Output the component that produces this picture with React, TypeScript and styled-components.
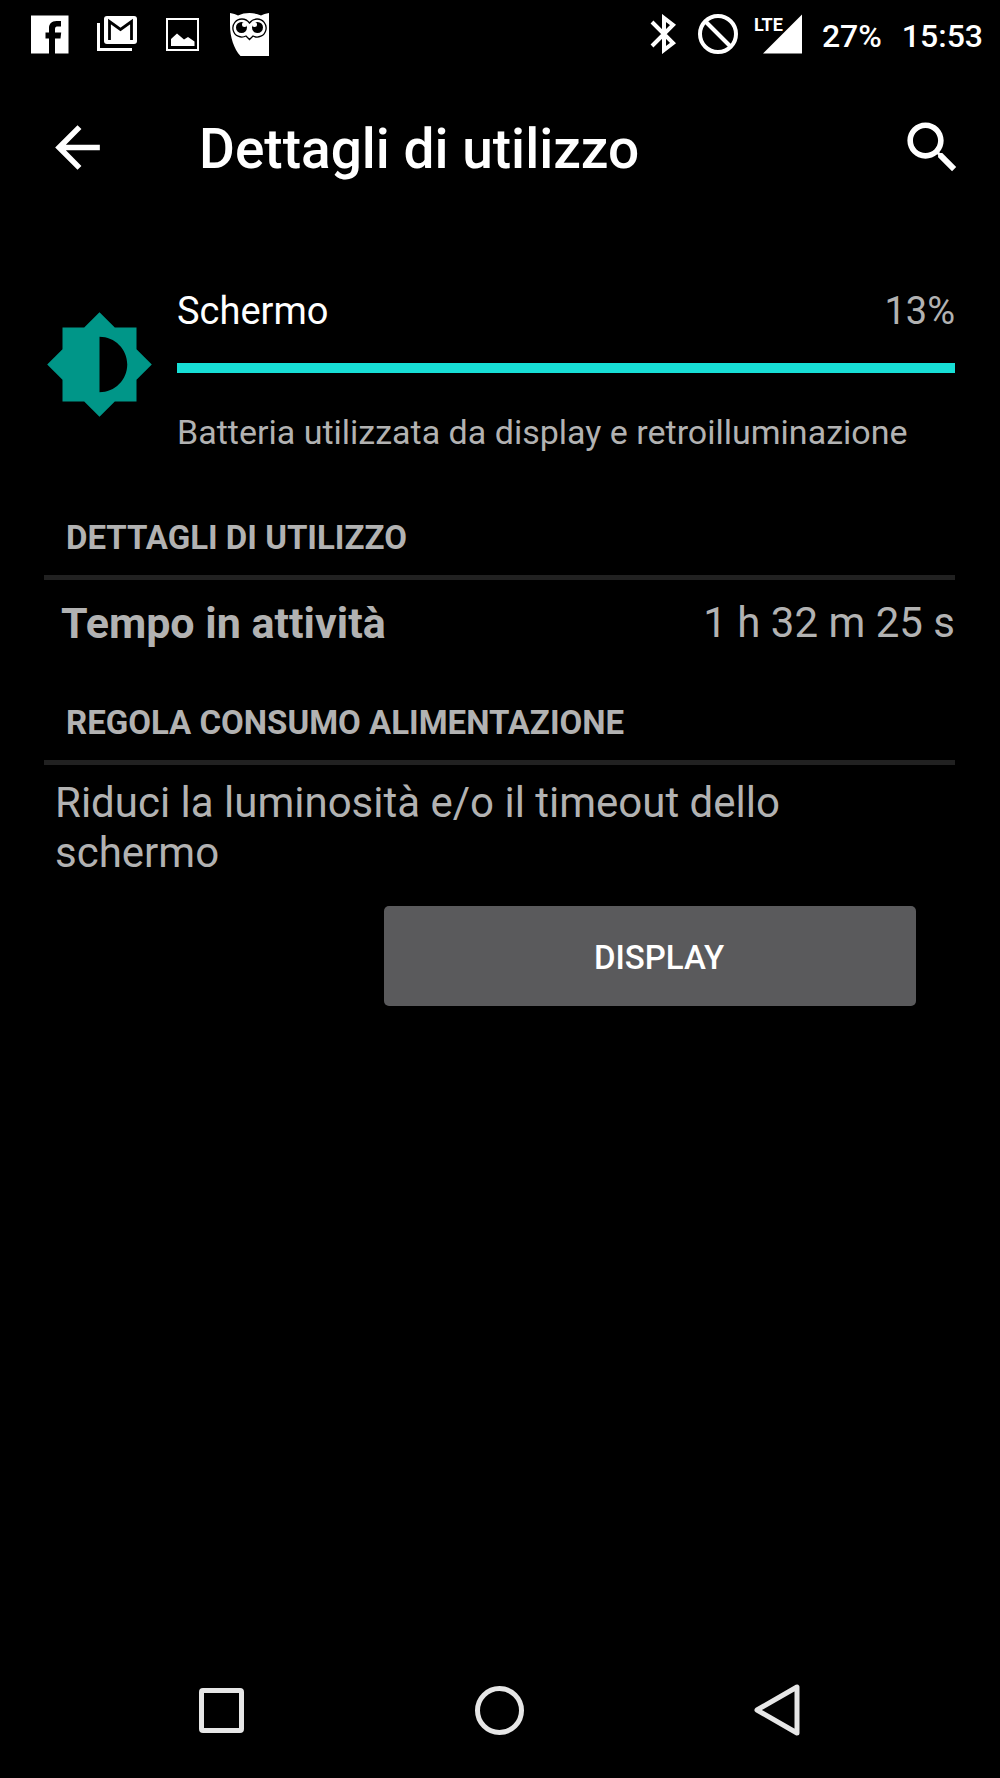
import React from "react";
import styled, { createGlobalStyle } from "styled-components";

const color = {
  background: "#000000",
  primary: "#ffffff",
  secondary: "#b2b2b2",
  divider: "#212121",
  teal: "#009688",
  accent: "#17dfd6",
  button: "#5a5a5c",
  nav: "#e6e6e6",
};

const GlobalStyle = createGlobalStyle`
  *, *::before, *::after { box-sizing: border-box; }
  body {
    margin: 0;
    background: ${color.background};
    color: ${color.secondary};
    font-family: Roboto, "Noto Sans", sans-serif;
  }
  h1, h2, p, dl, dt, dd { margin: 0; }
  button { font: inherit; color: inherit; border: 0; padding: 0; cursor: pointer; }
  svg { display: block; flex: none; }
`;

const Screen = styled.div`
  display: flex;
  flex-direction: column;
  min-height: 100vh;
`;

const StatusBar = styled.div`
  display: flex;
  justify-content: space-between;
  align-items: center;
  height: 68px;
  padding: 0 17px 0 30px;
  color: ${color.primary};
`;

const StatusGroup = styled.div<{ $gap: number }>`
  display: flex;
  align-items: center;
  gap: ${(p) => p.$gap}px;
`;

const Signal = styled.div`
  display: flex;
  align-items: flex-start;
  position: relative;
  width: 48px;
  justify-content: flex-end;
`;

const NetworkType = styled.span`
  position: absolute;
  left: 0;
  top: 0;
  font: 700 18px/22px Roboto, sans-serif;
`;

const StatusText = styled.span`
  font-size: 32px;
  line-height: 40px;
  font-weight: 500;
  padding-top: 4px;
`;

const AppBar = styled.header`
  display: flex;
  align-items: center;
  height: 158px;
  padding: 0 34px 0 44px;
  color: ${color.primary};
`;

const IconButton = styled.button`
  background: none;
`;

const Title = styled.h1`
  flex: 1;
  padding: 4px 0 0 88px;
  font-size: 55px;
  line-height: 66px;
  font-weight: 500;
`;

const Content = styled.main`
  flex: 1;
  padding: 62px 45px 0 44px;
`;

const Usage = styled.section`
  display: flex;
  align-items: flex-start;
  gap: 22px;
`;

const UsageIcon = styled.div`
  padding-top: 21px;
`;

const UsageBody = styled.div`
  flex: 1;
`;

const UsageLabel = styled.div`
  display: flex;
  justify-content: space-between;
  font-size: 38px;
  line-height: 46px;
`;

const UsageName = styled.span`
  color: ${color.primary};
`;

const Bar = styled.div`
  height: 10px;
  margin: 29px 0 39px;
  background: ${color.accent};
`;

const Description = styled.p`
  font-size: 34px;
  line-height: 40px;
`;

const SectionTitle = styled.h2<{ $gap: number }>`
  margin-top: ${(p) => p.$gap}px;
  padding: 0 22px 17px;
  border-bottom: 5px solid ${color.divider};
  font-size: 33px;
  line-height: 40px;
  font-weight: 700;
`;

const DetailRow = styled.dl`
  display: flex;
  justify-content: space-between;
  padding: 18px 0 0 17px;
  font-size: 42px;
  line-height: 50px;
`;

const DetailName = styled.dt`
  font-size: 43px;
  font-weight: 700;
`;

const Advice = styled.p`
  padding: 13px 100px 0 11px;
  font-size: 42px;
  line-height: 50px;
`;

const Actions = styled.div`
  display: flex;
  justify-content: flex-end;
  padding: 28px 39px 0 0;
`;

const ActionButton = styled.button`
  && {
    width: 61%;
    height: 100px;
    padding: 4px 0 0 18px;
    border-radius: 5px;
    background: ${color.button};
    color: ${color.primary};
    font-size: 33px;
    line-height: 40px;
    font-weight: 500;
  }
`;

const NavBar = styled.nav`
  display: grid;
  grid-template-columns: repeat(3, 1fr);
  align-items: center;
  height: 136px;
  padding: 0 84px 0 82px;
  color: ${color.nav};
`;

const NavButton = styled.button`
  display: flex;
  justify-content: center;
  background: none;
`;

const FacebookIcon = () => (
  <svg width="39" height="39" viewBox="0 0 39 39" fill="currentColor" aria-hidden="true">
    <path d="M1 0.500H38.500V38.500H25V23.500H30.500L31.200 17.500H25V14C25 12 26 11.500 28 11.500H31V6H26.500C21.500 6 19 9 19 13V17.500H15.500V23.500H19V38.500H1Z" />
  </svg>
);

const MailIcon = () => (
  <svg width="40" height="36" viewBox="0 0 40 36" fill="none" aria-hidden="true">
    <path d="M1.500 7V33.500H35" stroke="currentColor" strokeWidth="3" />
    <rect x="7" y="0" width="33" height="28" rx="3" fill="currentColor" />
    <path d="M12.500 24V5.500L23.500 13.500L34.500 5.500V24" stroke="#000" strokeWidth="2.800" />
  </svg>
);

const ImageIcon = () => (
  <svg width="37" height="33" viewBox="-1 0 37 33" fill="none" aria-hidden="true">
    <rect x="1" y="1" width="31" height="31" stroke="currentColor" strokeWidth="2" />
    <path d="M5 28V21L11 15.500L18 21.500L22 19L28.500 23.500V28Z" fill="currentColor" />
  </svg>
);

const OwlIcon = () => (
  <svg width="39" height="43" viewBox="0 0 39 43" fill="none" aria-hidden="true">
    <path d="M0 0C3 .5 6 1.500 8 2.500C15-.8 24-.8 31 2.500C33 1.500 36 .5 39 0V43H10.500C4 36 0 24 0 12Z" fill="currentColor" />
    <path d="M12 6A9 9 0 1 0 16 23L19.500 26.500L23 23A9 9 0 1 0 27 6C23.500 6 21 8 19.500 10C18 8 15.500 6 12 6Z" stroke="#000" strokeWidth="1.300" />
    <circle cx="11.500" cy="14.500" r="5.500" fill="#000" />
    <circle cx="27.500" cy="14.500" r="5.500" fill="#000" />
    <circle cx="14.500" cy="11.500" r="2.500" fill="currentColor" />
    <circle cx="24.500" cy="11.500" r="2.500" fill="currentColor" />
  </svg>
);

const BluetoothIcon = () => (
  <svg width="32" height="40" viewBox="0 0 32 40" fill="none" stroke="currentColor" strokeWidth="4" aria-hidden="true">
    <path d="M2 8L23 29L14 36V4L23 11L2 32" />
  </svg>
);

const BlockedIcon = () => (
  <svg width="40" height="40" viewBox="0 0 40 40" fill="none" stroke="currentColor" strokeWidth="4" aria-hidden="true">
    <circle cx="20" cy="20" r="18" />
    <path d="M7 7L33 33" />
  </svg>
);

const SignalIcon = () => (
  <svg width="39" height="40" viewBox="0 0 39 40" fill="currentColor" aria-hidden="true">
    <path d="M39 0.500V39.500H0Z" />
  </svg>
);

const BackIcon = () => (
  <svg width="67" height="67" viewBox="0 0 24 24" fill="currentColor" aria-hidden="true">
    <path d="M20 11H7.830l5.590-5.590L12 4l-8 8 8 8 1.410-1.410L7.830 13H20v-2z" />
  </svg>
);

const SearchIcon = () => (
  <svg width="67" height="67" viewBox="0 0 24 24" fill="currentColor" aria-hidden="true">
    <path d="M15.500 14h-.79l-.28-.27C15.410 12.590 16 11.110 16 9.500 16 5.910 13.090 3 9.500 3S3 5.910 3 9.500 5.910 16 9.500 16c1.610 0 3.090-.59 4.230-1.570l.27.28v.79l5 4.990L20.490 19l-4.990-5zm-6 0C7.010 14 5 11.990 5 9.500S7.010 5 9.500 5 14 7.010 14 9.500 11.990 14 9.500 14z" />
  </svg>
);

const BrightnessIcon = () => (
  <svg width="111" height="111" viewBox="0 0 24 24" fill={color.teal} aria-hidden="true">
    <path d="M20 15.310L23.310 12 20 8.690V4h-4.690L12 .69 8.690 4H4v4.690L.69 12 4 15.310V20h4.690L12 23.310 15.310 20H20v-4.690zM12 18V6c3.310 0 6 2.690 6 6s-2.690 6-6 6z" />
  </svg>
);

const RecentsIcon = () => (
  <svg width="45" height="45" viewBox="0 0 45 45" fill="none" stroke="currentColor" strokeWidth="5" aria-hidden="true">
    <rect x="2.500" y="2.500" width="40" height="40" rx="1.500" />
  </svg>
);

const HomeIcon = () => (
  <svg width="49" height="49" viewBox="0 0 49 49" fill="none" stroke="currentColor" strokeWidth="5" aria-hidden="true">
    <circle cx="24.500" cy="24.500" r="22" />
  </svg>
);

const NavBackIcon = () => (
  <svg width="46" height="52" viewBox="0 0 46 52" fill="none" stroke="currentColor" strokeWidth="5" strokeLinejoin="round" aria-hidden="true">
    <path d="M43 3V49L3 26Z" />
  </svg>
);

export default function App() {
  return (
    <>
      <GlobalStyle />
      <Screen>
        <StatusBar>
          <StatusGroup $gap={28}>
            <FacebookIcon />
            <MailIcon />
            <ImageIcon />
            <OwlIcon />
          </StatusGroup>
          <StatusGroup $gap={20}>
            <StatusGroup $gap={16}>
              <BluetoothIcon />
              <BlockedIcon />
              <Signal>
                <NetworkType>LTE</NetworkType>
                <SignalIcon />
              </Signal>
            </StatusGroup>
            <StatusText>27%</StatusText>
            <StatusText>15:53</StatusText>
          </StatusGroup>
        </StatusBar>

        <AppBar>
          <IconButton type="button" aria-label="Indietro">
            <BackIcon />
          </IconButton>
          <Title>Dettagli di utilizzo</Title>
          <IconButton type="button" aria-label="Cerca">
            <SearchIcon />
          </IconButton>
        </AppBar>

        <Content>
          <Usage>
            <UsageIcon>
              <BrightnessIcon />
            </UsageIcon>
            <UsageBody>
              <UsageLabel>
                <UsageName>Schermo</UsageName>
                <span>13%</span>
              </UsageLabel>
              <Bar />
              <Description>Batteria utilizzata da display e retroilluminazione</Description>
            </UsageBody>
          </Usage>

          <SectionTitle $gap={66}>DETTAGLI DI UTILIZZO</SectionTitle>
          <DetailRow>
            <DetailName>Tempo in attività</DetailName>
            <dd>1 h 32 m 25 s</dd>
          </DetailRow>

          <SectionTitle $gap={55}>REGOLA CONSUMO ALIMENTAZIONE</SectionTitle>
          <Advice>Riduci la luminosità e/o il timeout dello schermo</Advice>
          <Actions>
            <ActionButton type="button">DISPLAY</ActionButton>
          </Actions>
        </Content>

        <NavBar>
          <NavButton type="button" aria-label="Recenti">
            <RecentsIcon />
          </NavButton>
          <NavButton type="button" aria-label="Home">
            <HomeIcon />
          </NavButton>
          <NavButton type="button" aria-label="Indietro">
            <NavBackIcon />
          </NavButton>
        </NavBar>
      </Screen>
    </>
  );
}
